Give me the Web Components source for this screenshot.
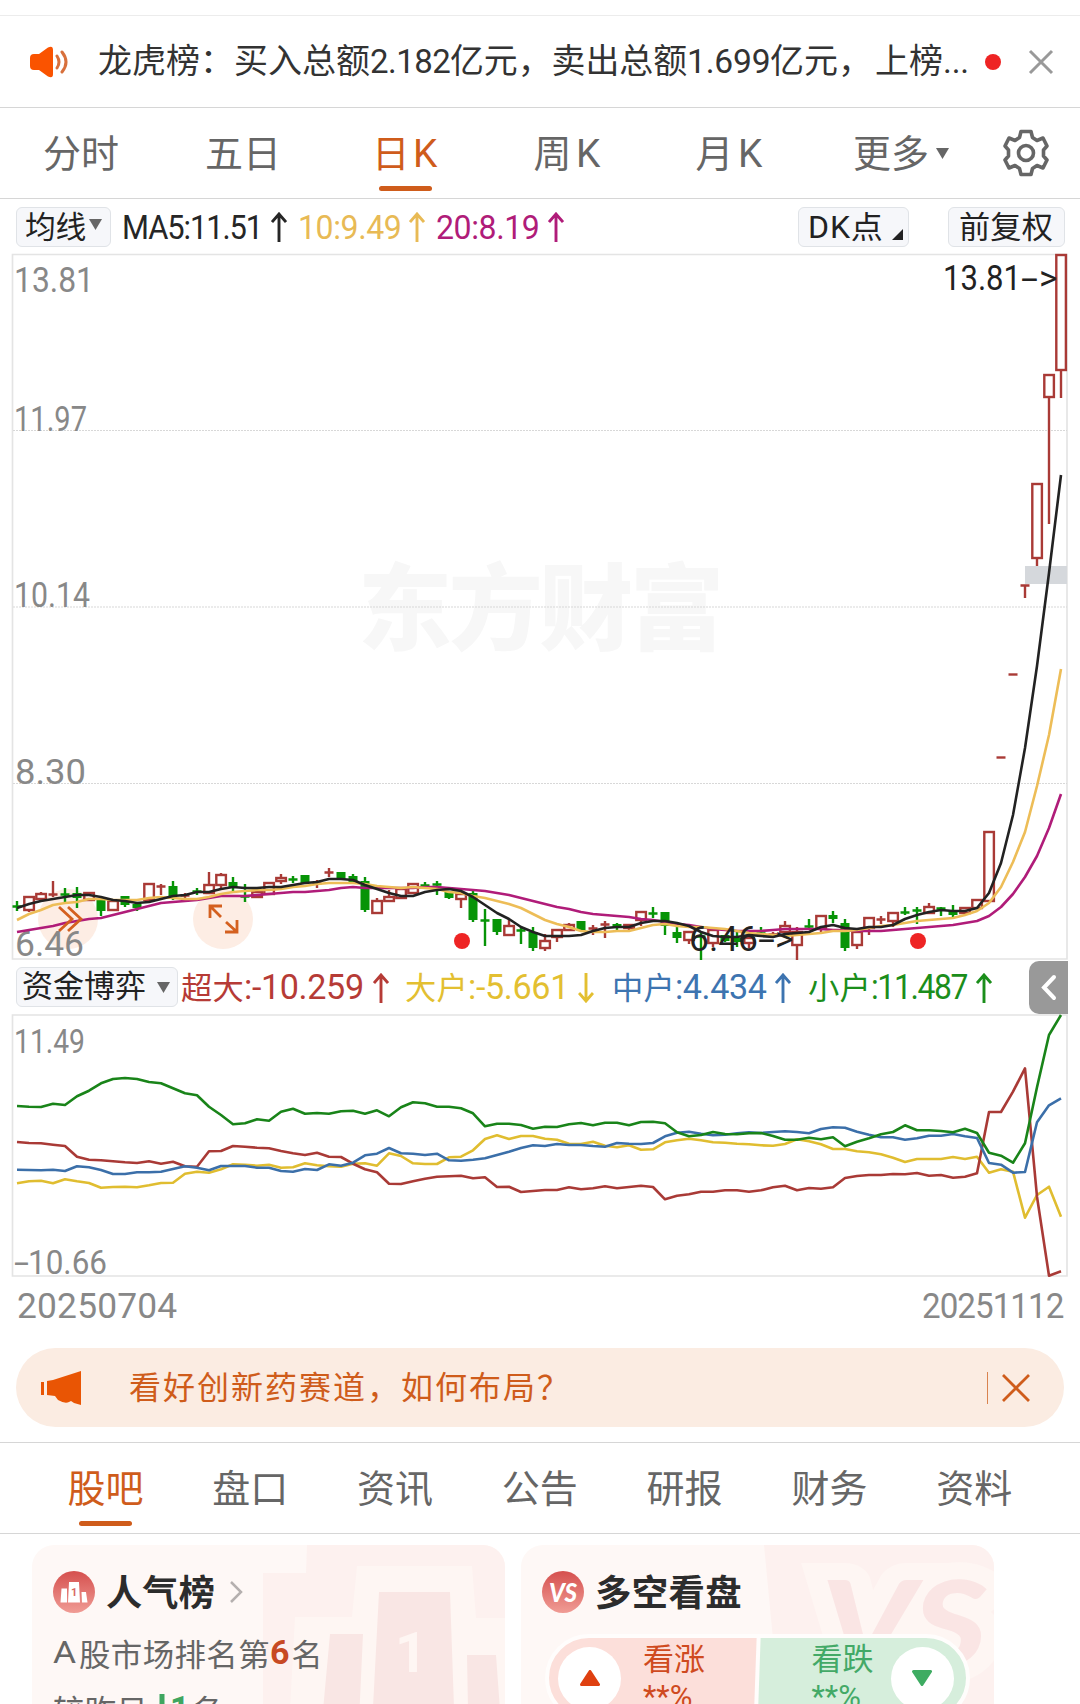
<!DOCTYPE html>
<html lang="zh-CN">
<head>
<meta charset="UTF-8">
<title>日K</title>
<style>
  body {
    margin: 0;
    width: 1080px;
    height: 1704px;
    overflow: hidden;
    background: #fff;
    color: #262626;
    font-family: Roboto, "Noto Sans CJK SC", sans-serif;
    --orange: #cf5c1b;
    --line: #d6d6d6;
  }
  stock-page { height: 1704px; }
</style>
</head>
<body>
<stock-page></stock-page>

<script>
// ---------- data: one entry per trading day, 12px apart ----------
// [colour, high, low, body top, body bottom]
const candles = [
  ["g",901,911,906,908],["r",897,912,897,910],["r",892,902,894,899],["r",881,897,894,895],["g",888,902,894,895],
  ["g",887,908,893,898],["r",892,900,893,900],["g",900,916,900,911],["r",901,910,901,910],["g",896,907,896,905],
  ["g",903,911,904,908],["r",884,900,884,900],["r",884,895,886,887],["g",881,900,886,896],["r",893,899,895,896],
  ["g",888,895,891,893],["r",872,893,885,893],["r",873,888,875,885],["g",877,893,882,888],["g",884,902,896,897],
  ["r",892,897,892,897],["r",883,894,883,894],["r",874,884,878,881],["g",876,883,879,880],["g",875,883,875,883],
  ["r",880,888,883,884],["r",868,877,872,873],["g",872,879,872,879],["g",874,882,876,882],["g",877,912,881,910],
  ["r",898,913,901,913],["r",890,902,897,901],["r",889,898,889,898],["r",884,893,884,893],["g",882,888,885,886],
  ["g",881,895,884,886],["g",892,899,892,898],["r",893,908,894,899],["g",891,922,893,920],["g",909,946,920,921],
  ["g",919,935,919,932],["r",919,936,926,935],["g",927,944,930,931],["g",927,951,932,948],["r",934,951,941,948],
  ["r",930,942,930,937],["r",923,930,925,930],["g",921,931,921,931],["r",925,935,928,929],["r",921,938,924,925],
  ["g",923,930,924,927],["r",925,930,925,928],["r",912,926,912,920],["g",907,918,913,914],["g",912,935,912,926],
  ["g",926,943,932,938],["r",932,944,932,940],["g",933,960,936,938],["r",930,947,930,943],["g",935,942,935,941],
  ["g",932,947,938,942],["r",938,948,938,943],["g",927,937,933,934],["r",932,936,934,935],["r",921,932,926,932],
  ["r",927,960,932,945],["g",919,930,926,927],["r",916,932,916,928],["g",911,923,915,919],["g",919,951,923,948],
  ["r",932,949,932,945],["r",918,935,918,928],["r",916,924,919,920],["r",913,927,913,921],["g",907,915,912,913],
  ["g",907,924,910,911],["r",903,913,907,913],["g",907,916,908,909],["g",905,917,910,915],["r",908,913,908,913],
  ["r",899,908,900,908],["r",832,901,832,901],["r",757,757,757,757],["r",674,674,674,674],["r",585,598,585,585],
  ["r",484,566,484,558],["r",375,524,375,397],["r",255,398,255,370]
];
const averages = {
  "#b01c79": [932,930,928,926,923,921,919,918,915,912,909,906,903,902,901,900,898,896,896,896,895,894,893,892,892,891,890,888,887,888,888,888,888,888,887,887,888,889,890,891,893,895,898,901,904,907,909,912,914,915,916,917,919,920,922,924,925,927,929,930,931,931,931,930,929,929,929,929,930,930,931,931,931,930,929,928,927,926,925,923,921,916,907,894,877,856,828,794],
  "#edbd57": [920,914,910,905,903,902,899,899,900,900,900,898,897,898,899,899,897,894,892,891,890,890,889,887,886,884,883,883,883,884,886,887,888,887,888,889,892,893,896,898,901,904,908,914,920,924,927,931,932,932,931,931,928,925,924,926,927,927,928,929,931,933,934,935,936,935,934,933,931,931,930,928,926,925,923,921,920,919,918,915,911,903,887,862,832,786,735,669],
  "#222": [908,904,901,899,897,895,895,897,900,901,903,902,899,896,895,892,892,889,887,888,888,887,887,885,883,882,879,879,880,885,889,893,896,896,892,890,889,891,897,905,913,919,927,932,936,936,936,935,931,928,927,927,923,921,921,923,926,932,936,937,937,935,936,937,934,933,932,927,925,928,929,927,927,925,919,915,912,910,911,911,908,893,863,815,748,666,573,475]
};
// fund flow lines, in thirds of a pixel below y = 1000
const flows = {
  "#e0bd30": [550,544,542,550,538,544,549,563,561,560,562,556,549,548,521,515,518,508,493,494,497,494,503,502,490,496,499,500,491,490,497,460,468,490,492,492,472,470,451,417,406,417,408,408,416,419,431,432,425,437,442,436,449,448,427,421,416,421,427,428,431,433,436,437,432,418,424,433,447,447,454,457,463,473,486,477,477,477,471,477,470,518,508,515,653,585,560,650],
  "#a93a36": [426,429,430,434,438,470,479,481,484,487,489,484,491,485,499,500,454,453,438,440,443,445,453,460,465,458,470,471,491,508,517,551,552,544,536,530,529,527,535,532,561,560,576,573,570,570,562,568,565,559,565,561,557,561,598,587,583,575,575,571,571,575,571,562,557,571,564,566,562,534,528,525,525,522,523,519,527,525,533,530,520,336,336,275,205,590,827,814],
  "#3b6fa9": [509,510,511,509,513,499,502,510,522,522,517,517,515,507,499,503,511,498,498,498,503,503,513,515,507,510,493,497,488,466,461,444,460,461,465,461,481,482,479,475,465,455,444,436,438,432,435,435,438,440,429,431,432,429,409,398,395,401,406,404,400,397,399,396,394,396,400,387,382,383,395,404,412,412,419,415,407,407,402,409,414,489,494,518,516,367,316,295],
  "#198419": [318,320,321,311,315,289,272,250,237,234,237,246,250,265,280,286,320,345,373,370,358,362,335,326,341,339,341,334,332,341,331,349,322,307,310,320,320,325,340,379,371,371,375,386,380,381,373,369,376,368,368,376,366,365,370,397,409,405,396,402,403,400,399,408,419,419,413,418,412,439,425,415,403,396,376,391,391,393,397,386,399,458,467,488,430,262,105,45]
};

const dayX = i => 17 + i * 12;
const line = (ys, color, toY) =>
  `<polyline points="${ys.map((y, i) => dayX(i) + "," + toY(y).toFixed(1)).join(" ")}" fill="none" stroke="${color}" stroke-width="2.600" stroke-linejoin="round"/>`;

class StockPage extends HTMLElement {
  constructor() {
    super();
    this.attachShadow({ mode: "open" }).innerHTML = `
      <style>
        :host { display: flex; flex-direction: column; overflow: hidden; }
        .top { height: 16px; border-bottom: 1px solid #ececec; box-sizing: border-box; flex: none; }
        .cards { display: flex; gap: 16px; padding: 11px 0 0 32px; }
      </style>
      <div class="top"></div>
      <notice-bar></notice-bar>
      <period-tabs></period-tabs>
      <average-bar></average-bar>
      <k-chart></k-chart>
      <flow-bar></flow-bar>
      <flow-chart></flow-chart>
      <date-range></date-range>
      <promo-banner>看好创新药赛道，如何布局？</promo-banner>
      <section-tabs></section-tabs>
      <div class="cards"><rank-card></rank-card><vote-card></vote-card></div>
    `;
  }
}

class NoticeBar extends HTMLElement {
  constructor() {
    super();
    this.attachShadow({ mode: "open" }).innerHTML = `
      <style>
        :host { display: flex; align-items: center; flex: none; height: 92px; box-sizing: border-box; padding-left: 29px; border-bottom: 1px solid var(--line); color: #333; font-size: 34px; }
        .text { width: 870px; margin: -6px 0 0 29px; white-space: nowrap; display: flex; align-items: baseline; }
        .dot { width: 16px; height: 16px; border-radius: 50%; background: #ee2424; margin-left: 17px; }
        .close { margin-left: 26px; }
      </style>
      <svg width="40" height="34" viewBox="0 0 40 34"><path d="M5 9H10L19 2.500Q24 0 24 5V29Q24 34 19 31.500L10 25H5Q1 25 1 21V13Q1 9 5 9Z" fill="#fa5300"/><path d="M28 11q4 6 0 12M33 7q8 10 0 20" fill="none" stroke="#d8703c" stroke-width="3" stroke-linecap="round"/></svg>
      <div class="text"><fit-text w="272">龙虎榜：买入总额</fit-text><fit-text w="80">2.182</fit-text><fit-text w="237">亿元，卖出总额</fit-text><fit-text w="83">1.699</fit-text><fit-text w="102">亿元，</fit-text><fit-text w="68" style="margin-left:3px">上榜</fit-text><fit-text w="26">...</fit-text></div>
      <div class="dot"></div>
      <svg class="close" width="28" height="28"><path d="M3 3L25 25M25 3L3 25" stroke="#999" stroke-width="3"/></svg>
    `;
  }
}

class PeriodTabs extends HTMLElement {
  constructor() {
    super();
    this.attachShadow({ mode: "open" }).innerHTML = `
      <style>
        :host { display: flex; flex: none; height: 91px; box-sizing: border-box; border-bottom: 1px solid var(--line); color: #666; font-size: 38px; }
        div { width: 162px; display: flex; flex-direction: column; align-items: center; line-height: 56px; padding-top: 18px; height: 74px; box-sizing: border-box; }
        .on { color: var(--orange); }
        .on::after { content: ""; width: 53px; height: 5px; border-radius: 3px; background: var(--orange); margin-top: 4px; flex: none; }
        .k { display: flex; gap: 4px; }
        .more { flex-direction: row; align-items: flex-start; width: 140px; margin-left: 43px; }
        .more svg { margin: 22px 0 0 7px; }
        .gear { margin: 20px 0 0 8px; }
      </style>
      <div><fit-text w="76">分时</fit-text></div>
      <div><fit-text w="76">五日</fit-text></div>
      <div class="on"><span class="k"><fit-text w="37">日</fit-text><fit-text w="25">K</fit-text></span></div>
      <div><span class="k"><fit-text w="38">周</fit-text><fit-text w="25">K</fit-text></span></div>
      <div><span class="k"><fit-text w="38">月</fit-text><fit-text w="25">K</fit-text></span></div>
      <div class="more"><fit-text w="76">更多</fit-text><svg width="13" height="11"><path d="M0 0H13L6.500 11Z" fill="#666"/></svg></div>
      <svg class="gear" width="50" height="50" viewBox="-25 -25 50 50" fill="none" stroke="#666" stroke-width="3.600"><path d="M-5 -21.500H5L6.500 -15.500L11 -12.500L17 -15L21 -7L17.500 -3V3L21 7L17 15L11 12.500L6.500 15.500L5 21.500H-5L-6.500 15.500L-11 12.500L-17 15L-21 7L-17.500 3V-3L-21 -7L-17 -15L-11 -12.500L-6.500 -15.500Z" stroke-linejoin="round"/><circle r="7.500"/></svg>
    `;
  }
}

// small grey button used above the charts
class ChipButton extends HTMLElement {
  constructor() {
    super();
    this.attachShadow({ mode: "open" }).innerHTML = `
      <style>
        :host { display: flex; align-items: center; flex: none; height: 40px; box-sizing: border-box; background: #f6f7fa; border: 1.500px solid #e0e3e7; border-radius: 6px; color: #222; font-size: 31px; line-height: 40px; }
      </style>
      <slot></slot>
    `;
  }
}

class TrendArrow extends HTMLElement {
  constructor() {
    super();
    const turn = this.hasAttribute("down") ? 'transform="rotate(180 8 15)"' : "";
    this.attachShadow({ mode: "open" }).innerHTML = `
      <style>:host { display: block; flex: none; width: 16px; height: 30px; } svg { display: block; }</style>
      <svg width="16" height="30"><path ${turn} d="M8 30V2M1 10L8 2L15 10" fill="none" stroke="currentColor" stroke-width="2.900"/></svg>
    `;
  }
}

class AverageBar extends HTMLElement {
  constructor() {
    super();
    this.attachShadow({ mode: "open" }).innerHTML = `
      <style>
        :host { display: flex; align-items: center; flex: none; height: 54px; box-sizing: border-box; padding: 1px 0 0 16px; font-size: 33px; }
        trend-arrow { margin-left: 9px; }
        fit-text { margin-left: 11px; padding-top: 2px; }
        chip-button fit-text { margin-left: 0; }
      </style>
      <chip-button style="width:95px;padding-left:8px"><fit-text w="61">均线</fit-text><svg width="13" height="11" style="margin:-5px 0 0 3px"><path d="M0 0H13L6.500 11Z" fill="#666"/></svg></chip-button>
      <fit-text w="140" style="margin-left:11px">MA5:11.51</fit-text><trend-arrow></trend-arrow>
      <fit-text w="103" style="color:#e8ba55">10:9.49</fit-text><trend-arrow style="color:#e8ba55;margin-left:8px"></trend-arrow>
      <fit-text w="103" style="color:#b01c79">20:8.19</fit-text><trend-arrow style="color:#b01c79"></trend-arrow>
      <chip-button style="width:111px;margin-left:234px;padding-left:9px"><fit-text w="76">DK点</fit-text><svg width="11" height="11" style="margin:15px 0 0 8px"><path d="M11 0V11H0Z" fill="#222"/></svg></chip-button>
      <chip-button style="width:117px;margin-left:39px;padding-left:10px"><fit-text w="94">前复权</fit-text></chip-button>
    `;
  }
}

class KChart extends HTMLElement {
  constructor() {
    super();
    const bars = candles.map(([c, high, low, top, bottom], i) => {
      const x = dayX(i);
      const color = c === "g" ? "#079407" : "#a93a36";
      if (bottom - top < 3) {
        return `<path d="M${x - 4.5} ${top + .5}h9M${x} ${high}V${low}" stroke="${color}" stroke-width="2.400" fill="none"/>`;
      }
      const body = `<rect x="${x - (c === "g" ? 4.5 : 4.7)}" y="${top}" width="${c === "g" ? 9 : 9.6}" height="${bottom - top}" fill="${c === "g" ? color : "none"}" ${c === "g" ? "" : `stroke="${color}" stroke-width="2.400"`}/>`;
      return body + `<path d="M${x} ${high}V${top}M${x} ${bottom}V${low}" stroke="${color}" stroke-width="2.400"/>`;
    }).join("");
    this.attachShadow({ mode: "open" }).innerHTML = `
      <style>
        :host { display: block; flex: none; height: 707px; }
        svg { display: block; }
        text { font-size: 35px; fill: #888; }
        .mark { fill: #222; }
        .brand { font: 900 94px "Noto Sans CJK SC", sans-serif; fill: #f7f7f7; }
      </style>
      <svg width="1080" height="707" viewBox="0 253 1080 707">
        <text class="brand" x="358" y="643" textLength="366">东方财富</text>
        <path d="M12.500 254.500H1067V959H12.500Z" fill="none" stroke="#e4e4e4" stroke-width="1.700"/>
        <path d="M13 430.500H1067M13 607H1067M13 783.500H1067" stroke="#d8d8d8" stroke-width="1.200" stroke-dasharray="2 1"/>
        <rect x="1025" y="566" width="42" height="18" fill="#d5d8dc"/>
        <circle cx="68" cy="919" r="30" fill="#fdede4"/><circle cx="223" cy="919" r="30" fill="#fdede4"/>
        <text x="14" y="292" textLength="80" lengthAdjust="spacingAndGlyphs">13.81</text>
        <text x="14" y="431" textLength="73" lengthAdjust="spacingAndGlyphs">11.97</text>
        <text x="14" y="607" textLength="76" lengthAdjust="spacingAndGlyphs">10.14</text>
        <text x="15" y="784" textLength="71" lengthAdjust="spacingAndGlyphs">8.30</text>
        <text x="15" y="956" textLength="69" lengthAdjust="spacingAndGlyphs">6.46</text>
        ${bars}
        ${Object.entries(averages).map(([color, ys]) => line(ys, color, y => y)).join("")}
        <path d="M59 907L72 919L59 931M68 907L81 919L68 931M210 918V906H222M210 906L221 917M225 932H237V920M226 922L237 932" fill="none" stroke="#d4601f" stroke-width="2.800"/>
        <circle cx="462" cy="941" r="8" fill="#ee2424"/><circle cx="918" cy="941" r="8" fill="#ee2424"/>
        <text class="mark" y="290"><tspan x="943" textLength="78" lengthAdjust="spacingAndGlyphs">13.81</tspan><tspan x="1021" textLength="17" lengthAdjust="spacingAndGlyphs">-</tspan><tspan x="1039">&gt;</tspan></text>
        <text class="mark" y="951"><tspan x="689" textLength="69" lengthAdjust="spacingAndGlyphs">6.46</tspan><tspan x="758" textLength="17" lengthAdjust="spacingAndGlyphs">-</tspan><tspan x="775">&gt;</tspan></text>
      </svg>
    `;
  }
}

class FlowBar extends HTMLElement {
  constructor() {
    super();
    this.attachShadow({ mode: "open" }).innerHTML = `
      <style>
        :host { display: flex; align-items: center; flex: none; height: 54px; padding-left: 16px; font-size: 35px; }
        span { display: flex; align-items: center; }
        .cjk { font-size: 31px; margin-top: -4px; }
        trend-arrow { margin: 1px 0 0 9px; }
        .fold { width: 39px; height: 53px; background: #999; border-radius: 10px 0 0 10px; margin-left: 37px; }
      </style>
      <chip-button style="width:162px;padding-left:5px"><fit-text w="124">资金博弈</fit-text><svg width="13" height="11" style="margin-left:11px"><path d="M0 0H13L6.500 11Z" fill="#666"/></svg></chip-button>
      <span style="color:#b63b36;margin-left:3px"><fit-text class="cjk" w="63">超大</fit-text><fit-text w="120">:-10.259</fit-text><trend-arrow></trend-arrow></span>
      <span style="color:#e3bf31;margin-left:16px"><fit-text class="cjk" w="63">大户</fit-text><fit-text w="101">:-5.661</fit-text><trend-arrow down></trend-arrow></span>
      <span style="color:#3d74b0;margin-left:18px"><fit-text class="cjk" w="63">中户</fit-text><fit-text w="91">:4.434</fit-text><trend-arrow></trend-arrow></span>
      <span style="color:#1b8e1b;margin-left:17px"><fit-text class="cjk" w="63">小户</fit-text><fit-text w="96">:11.487</fit-text><trend-arrow></trend-arrow></span>
      <svg class="fold"><path d="M25 16L15 26.500L25 37" fill="none" stroke="#fff" stroke-width="4" stroke-linecap="round"/></svg>
    `;
  }
}

class FlowChart extends HTMLElement {
  constructor() {
    super();
    this.attachShadow({ mode: "open" }).innerHTML = `
      <style>
        :host { display: block; flex: none; height: 264px; }
        svg { display: block; }
        text { font-size: 34px; fill: #888; }
      </style>
      <svg width="1080" height="264" viewBox="0 1014 1080 264">
        <path d="M12.500 1015H1067V1276H12.500Z" fill="none" stroke="#e4e4e4" stroke-width="1.700"/>
        <text x="14" y="1053" textLength="71" lengthAdjust="spacingAndGlyphs">11.49</text>
        <text y="1274"><tspan x="14" textLength="15" lengthAdjust="spacingAndGlyphs">-</tspan><tspan x="28" textLength="79" lengthAdjust="spacingAndGlyphs">10.66</tspan></text>
        ${Object.entries(flows).map(([color, ys]) => line(ys, color, y => 1000 + y / 3)).join("")}
      </svg>
    `;
  }
}

class DateRange extends HTMLElement {
  constructor() {
    super();
    this.attachShadow({ mode: "open" }).innerHTML = `
      <style>
        :host { display: flex; justify-content: space-between; flex: none; height: 70px; box-sizing: border-box; padding: 8px 17px 0 17px; color: #888; font-size: 35px; line-height: 42px; }
      </style>
      <fit-text w="160">20250704</fit-text><fit-text w="141">20251112</fit-text>
    `;
  }
}

class PromoBanner extends HTMLElement {
  constructor() {
    super();
    this.attachShadow({ mode: "open" }).innerHTML = `
      <style>
        :host { display: flex; align-items: center; flex: none; height: 79px; margin: 0 16px 15px; border-radius: 40px; background: #fbece2; color: var(--orange); font-size: 32px; }
        .horn { margin-left: 25px; }
        .text { flex: 1; margin: -5px 0 0 47px; letter-spacing: 2px; }
        .bar { width: 1.500px; height: 32px; background: #d9834f; }
        .close { margin: 0 33px 0 13px; }
      </style>
      <svg class="horn" width="41" height="36"><path d="M0 12h3v13H0ZM6 11L12 10L40 1V35L33 33L30 31L28 32Q24 34 17 30L14 26L6 25Z" fill="#e95504"/></svg>
      <div class="text"><slot></slot></div>
      <div class="bar"></div>
      <svg class="close" width="30" height="30"><path d="M2 2L28 28M28 2L2 28" stroke="currentColor" stroke-width="2.800"/></svg>
    `;
  }
}

class SectionTabs extends HTMLElement {
  constructor() {
    super();
    const names = ["股吧", "盘口", "资讯", "公告", "研报", "财务", "资料"];
    this.attachShadow({ mode: "open" }).innerHTML = `
      <style>
        :host { display: grid; grid-template-columns: repeat(7, 144.800px); flex: none; height: 92px; box-sizing: border-box; padding-left: 33px; border-top: 1px solid var(--line); border-bottom: 1px solid var(--line); color: #666; font-size: 38px; }
        div { display: flex; flex-direction: column; align-items: center; line-height: 56px; padding-top: 18px; }
        .on { color: var(--orange); }
        .on::after { content: ""; width: 53px; height: 5px; border-radius: 3px; background: var(--orange); margin-top: 4px; }
      </style>
      ${names.map((name, i) => `<div class="${i ? "" : "on"}">${name}</div>`).join("")}
    `;
  }
}

const cardStyle = `
  :host { display: block; position: relative; flex: none; width: 473px; height: 220px; box-sizing: border-box; border-radius: 22px; overflow: hidden; background: #fef8f6; }
  .bg { position: absolute; left: 0; top: 0; }
  .head { display: flex; align-items: center; position: relative; height: 42px; padding: 26px 0 0 21px; font-weight: bold; font-size: 36px; color: #2c2c2c; }
  .head svg { flex: none; }
  .head fit-text { margin: -4px 0 0 11px; }
`;

class RankCard extends HTMLElement {
  constructor() {
    super();
    this.attachShadow({ mode: "open" }).innerHTML = `
      <style>
        ${cardStyle}
        p { position: relative; display: flex; align-items: center; height: 56px; margin: 0; padding-left: 21px; font-size: 31px; color: #666; }
        .first { margin-top: 11px; }
        b { color: #c74923; font-size: 34px; }
        .down { color: #3fa660; display: flex; align-items: center; margin: 0 6px 0 6px; }
      </style>
      <svg class="bg" width="473" height="220">
        <path d="M275 0H473V220H231V28H274Z" fill="#fdf1ef"/>
        <path d="M325 21H440L444 73H473V220H255L263 72H320Z" fill="#fef6f3"/>
        <path d="M347 47H418L424 220H338ZM298 89H331L325 220H286ZM435 110H464L472 220H437Z" fill="#f9e6e4"/>
        <text x="363" y="127" font-size="56" font-weight="bold" fill="#fef6f3">1</text>
      </svg>
      <div class="head">
        <svg width="42" height="42">
          <defs><linearGradient id="red" x2="0" y2="1"><stop stop-color="#d5504e"/><stop offset="1" stop-color="#f09c95"/></linearGradient></defs>
          <circle cx="21" cy="21" r="21" fill="url(#red)"/>
          <path d="M8.500 17.500H14V31.500H7.500ZM16 11H26L27 31.500H15ZM28.500 21H33L34.500 31.500H29Z" fill="#fff"/>
          <text x="18" y="25" font-size="11" font-weight="bold" fill="#d96a66">1</text>
        </svg>
        <fit-text w="109">人气榜</fit-text>
        <svg width="16" height="24" style="margin-left:14px"><path d="M2 2L12 12L2 22" fill="none" stroke="#b5b0af" stroke-width="2.500"/></svg>
      </div>
      <p class="first"><fit-text w="26">A</fit-text><fit-text w="191">股市场排名第</fit-text><b>6</b><fit-text w="31" style="margin-left:2px">名</fit-text></p>
      <p><fit-text w="95">较昨日</fit-text><span class="down"><svg width="16" height="28"><path d="M8 0V24M1 17L8 25L15 17" fill="none" stroke="currentColor" stroke-width="5"/></svg><b style="color:inherit">1</b></span><fit-text w="31" style="margin-left:-4px">名</fit-text></p>
    `;
  }
}

class VoteCard extends HTMLElement {
  constructor() {
    super();
    this.attachShadow({ mode: "open" }).innerHTML = `
      <style>
        ${cardStyle}
        .vs { font: italic 900 18px Lato, sans-serif; fill: #fff; }
        .ghost { font: italic 900 118px Lato, sans-serif; fill: #fae5e4; stroke: #fef6f3; stroke-width: 34px; paint-order: stroke; }
        .pill { position: relative; display: flex; margin: 21px 0 0 24px; width: 425px; height: 88px; box-sizing: border-box; border: 4px solid #fffdfc; border-radius: 44px; overflow: hidden; background: linear-gradient(92deg, #fcdfda 0 207px, #fffdfc 208px 211px, #d6eedc 212px); }
        .side { display: flex; align-items: center; width: 50%; box-sizing: border-box; color: #cf4a20; font-size: 31px; line-height: 37px; }
        .side.r { color: #43a967; padding-left: 54px; }
        .disc { width: 63px; height: 63px; border-radius: 50%; background: #fff; display: flex; align-items: center; justify-content: center; flex: none; margin: 0 22px 0 9px; }
        .r .disc { margin: 0 0 0 17px; }
      </style>
      <svg class="bg" width="473" height="220">
        <path d="M243 0H473V220H264Z" fill="#fdf1ef"/>
        <text class="ghost" x="300" y="121" textLength="166" lengthAdjust="spacingAndGlyphs">VS</text>
      </svg>
      <div class="head">
        <svg width="42" height="42">
          <defs><linearGradient id="red" x2="0" y2="1"><stop stop-color="#d5504e"/><stop offset="1" stop-color="#f09c95"/></linearGradient></defs>
          <circle cx="21" cy="21" r="21" fill="url(#red)"/>
          <text class="vs" style="font-size:26px" x="7" y="31" textLength="28" lengthAdjust="spacingAndGlyphs">VS</text>
        </svg>
        <fit-text w="147">多空看盘</fit-text>
      </div>
      <div class="pill">
        <div class="side"><div class="disc"><svg width="20" height="16"><path d="M10 1.500L18.500 14.500H1.500Z" fill="#df4010" stroke="#df4010" stroke-width="3" stroke-linejoin="round"/></svg></div><div>看涨<br>**%</div></div>
        <div class="side r"><div>看跌<br>**%</div><div class="disc"><svg width="20" height="16"><path d="M10 14.500L18.500 1.500H1.500Z" fill="#3eac62" stroke="#3eac62" stroke-width="3" stroke-linejoin="round"/></svg></div></div>
      </div>
    `;
  }
}

// one line of text set to a given width: half by scaling, half by letter spacing
class FitText extends HTMLElement {
  constructor() {
    super();
    this.attachShadow({ mode: "open" }).innerHTML = `
      <style>
        :host { display: block; flex: none; white-space: nowrap; }
        span { display: inline-block; transform-origin: 0 50%; }
      </style>
      <span><slot></slot></span>
    `;
  }
  connectedCallback() {
    const width = Number(this.getAttribute("w"));
    const span = this.shadowRoot.querySelector("span");
    this.style.width = width + "px";
    const natural = span.offsetWidth;
    if (!natural) return;
    const scale = Math.sqrt(width / natural);
    span.style.letterSpacing = (width / scale - natural) / this.textContent.length + "px";
    span.style.transform = `scaleX(${scale})`;
  }
}

customElements.define("stock-page", StockPage);
customElements.define("notice-bar", NoticeBar);
customElements.define("period-tabs", PeriodTabs);
customElements.define("chip-button", ChipButton);
customElements.define("trend-arrow", TrendArrow);
customElements.define("average-bar", AverageBar);
customElements.define("k-chart", KChart);
customElements.define("flow-bar", FlowBar);
customElements.define("flow-chart", FlowChart);
customElements.define("date-range", DateRange);
customElements.define("promo-banner", PromoBanner);
customElements.define("section-tabs", SectionTabs);
customElements.define("rank-card", RankCard);
customElements.define("vote-card", VoteCard);
// last, so that every box around it can already be measured
customElements.define("fit-text", FitText);
</script>
</body>
</html>
